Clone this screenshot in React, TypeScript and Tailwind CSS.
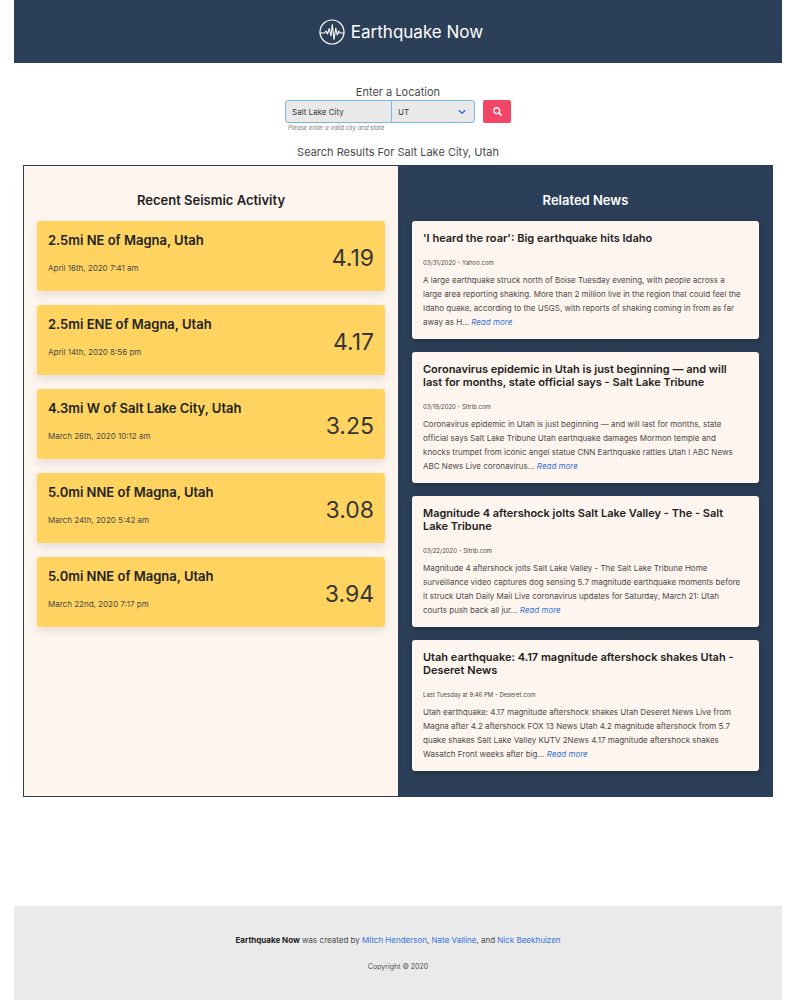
import { FaChevronDown, FaSearch } from "react-icons/fa";

type Quake = { place: string; date: string; magnitude: string };
type Story = { title: string; source: string; summary: string };

const quakes: Quake[] = [
  { place: "2.5mi NE of Magna, Utah", date: "April 16th, 2020 7:41 am", magnitude: "4.19" },
  { place: "2.5mi ENE of Magna, Utah", date: "April 14th, 2020 8:56 pm", magnitude: "4.17" },
  { place: "4.3mi W of Salt Lake City, Utah", date: "March 26th, 2020 10:12 am", magnitude: "3.25" },
  { place: "5.0mi NNE of Magna, Utah", date: "March 24th, 2020 5:42 am", magnitude: "3.08" },
  { place: "5.0mi NNE of Magna, Utah", date: "March 22nd, 2020 7:17 pm", magnitude: "3.94" },
];

const stories: Story[] = [
  {
    title: "'I heard the roar': Big earthquake hits Idaho",
    source: "03/31/2020 - Yahoo.com",
    summary:
      "A large earthquake struck north of Boise Tuesday evening, with people across a large area reporting shaking. More than 2 million live in the region that could feel the Idaho quake, according to the USGS, with reports of shaking coming in from as far away as H...",
  },
  {
    title: "Coronavirus epidemic in Utah is just beginning — and will last for months, state official says - Salt Lake Tribune",
    source: "03/19/2020 - Sltrib.com",
    summary:
      "Coronavirus epidemic in Utah is just beginning — and will last for months, state official says Salt Lake Tribune Utah earthquake damages Mormon temple and knocks trumpet from iconic angel statue CNN Earthquake rattles Utah l ABC News ABC News Live coronavirus...",
  },
  {
    title: "Magnitude 4 aftershock jolts Salt Lake Valley - The - Salt Lake Tribune",
    source: "03/22/2020 - Sltrib.com",
    summary:
      "Magnitude 4 aftershock jolts Salt Lake Valley - The Salt Lake Tribune Home surveillance video captures dog sensing 5.7 magnitude earthquake moments before it struck Utah Daily Mail Live coronavirus updates for Saturday, March 21: Utah courts push back all jur...",
  },
  {
    title: "Utah earthquake: 4.17 magnitude aftershock shakes Utah - Deseret News",
    source: "Last Tuesday at 9:46 PM - Deseret.com",
    summary:
      "Utah earthquake: 4.17 magnitude aftershock shakes Utah Deseret News Live from Magna after 4.2 aftershock FOX 13 News Utah 4.2 magnitude aftershock from 5.7 quake shakes Salt Lake Valley KUTV 2News 4.17 magnitude aftershock shakes Wasatch Front weeks after big...",
  },
];

function SeismographIcon() {
  return (
    <svg viewBox="0 0 26 26" className="size-[26px]" fill="none" stroke="currentColor" strokeLinejoin="round" strokeLinecap="round" aria-hidden="true">
      <circle cx="13" cy="13" r="12" strokeWidth="1.2" />
      <path d="M1 14H5.5L7 12L8.5 15L10.3 9.5L12 17L13.3 5.5L15 20.5L16.8 9L18.2 16L19.8 12L21 14H25" strokeWidth="1.1" />
    </svg>
  );
}

function QuakeCard({ place, date, magnitude }: Quake) {
  return (
    <li className="flex items-center justify-between rounded-[3px] bg-[#ffd35f] px-[11px] pt-[11px] pb-4 shadow-[0_4px_10px_rgba(10,10,10,0.1)]">
      <div>
        <h3 className="text-[13px] leading-4 font-semibold text-[#222]">{place}</h3>
        <p className="mt-[13px] text-[8px] leading-[14px]">{date}</p>
      </div>
      <p className="pt-2 text-[23px] leading-7 text-[#363636]">{magnitude}</p>
    </li>
  );
}

function StoryCard({ title, source, summary }: Story) {
  return (
    <li className="rounded-[3px] bg-[#fff5ef] pt-[11px] pr-4 pb-[10px] pl-[11px] shadow-[0_2px_6px_rgba(10,10,10,0.3)]">
      <h3 className="text-[11px] leading-[13px] font-semibold text-[#222]">{title}</h3>
      <p className="mt-[13px] text-[6px] leading-[10px]">{source}</p>
      <p className="mt-[5px] text-[8px] leading-[14px]">
        {summary}{" "}
        <a href="#" className="text-[#3273dc] italic">Read more</a>
      </p>
    </li>
  );
}

export default function App() {
  return (
    <div className="min-h-screen bg-white pr-[18px] pl-[14px] font-[Inter,sans-serif] text-[#4a4a4a]">
      <header className="flex h-[63px] items-center justify-center gap-[6px] bg-[#2c3f58] pl-[6px] text-white">
        <SeismographIcon />
        <h1 className="text-[17px] leading-6">Earthquake Now</h1>
      </header>

      <main className="px-[9px] pt-[21px]">
        <form className="flex flex-col items-center" onSubmit={(e) => e.preventDefault()}>
          <label htmlFor="city" className="text-[11px] leading-4">Enter a Location</label>
          <div className="flex items-start gap-2">
            <div>
              <div className="flex h-[23px]">
                <input
                  id="city"
                  defaultValue="Salt Lake City"
                  className="w-[107px] rounded-l-[3px] border border-[#78b8e6] bg-[#e9e9e9] px-[6px] text-[8px] text-[#363636] outline-none"
                />
                <div className="relative -ml-px flex">
                  <select
                    aria-label="State"
                    defaultValue="UT"
                    className="w-[84px] appearance-none rounded-r-[3px] border border-[#78b8e6] bg-[#e9e9e9] px-[6px] text-[8px] text-[#363636] outline-none"
                  >
                    <option>UT</option>
                    <option>ID</option>
                  </select>
                  <FaChevronDown className="pointer-events-none absolute top-2 right-[9px] size-2 text-[#2563cf]" />
                </div>
              </div>
              <p className="pl-[3px] text-[6px] leading-[10px] text-[#7a7a7a] italic">Please enter a valid city and state</p>
            </div>
            <button type="submit" aria-label="Search" className="flex h-[23px] w-7 items-center justify-center rounded-[2px] bg-[#f14668] text-white">
              <FaSearch className="size-[9px]" />
            </button>
          </div>
        </form>

        <p className="mt-[11px] text-center text-[11px] leading-4">Search Results For Salt Lake City, Utah</p>

        <div className="mt-[5px] grid grid-cols-2 border border-[#2c3f58]">
          <section className="bg-[#fff5ef] px-[13px] pt-6 pb-[25px]">
            <h2 className="text-center text-[13px] leading-5 font-semibold text-[#222]">Recent Seismic Activity</h2>
            <ul className="mt-[11px] flex flex-col gap-[14px]">
              {quakes.map((quake) => (
                <QuakeCard key={quake.date} {...quake} />
              ))}
            </ul>
          </section>
          <section className="bg-[#2c3f58] pt-6 pr-[13px] pb-[25px] pl-[14px]">
            <h2 className="text-center text-[13px] leading-5 font-semibold text-white">Related News</h2>
            <ul className="mt-[11px] flex flex-col gap-[13px]">
              {stories.map((story) => (
                <StoryCard key={story.title} {...story} />
              ))}
            </ul>
          </section>
        </div>
      </main>

      <footer className="mt-[109px] bg-[#eaeaea] pt-[27px] pb-[26px] text-center">
        <p className="text-[8px] leading-[14px]">
          <strong className="font-bold text-[#222]">Earthquake Now</strong> was created by{" "}
          <a href="#" className="text-[#3273dc]">Mitch Henderson</a>,{" "}
          <a href="#" className="text-[#3273dc]">Nate Valline</a>, and{" "}
          <a href="#" className="text-[#3273dc]">Nick Beekhuizen</a>
        </p>
        <p className="mt-[13px] text-[7px] leading-[14px]">Copyright © 2020</p>
      </footer>
    </div>
  );
}
